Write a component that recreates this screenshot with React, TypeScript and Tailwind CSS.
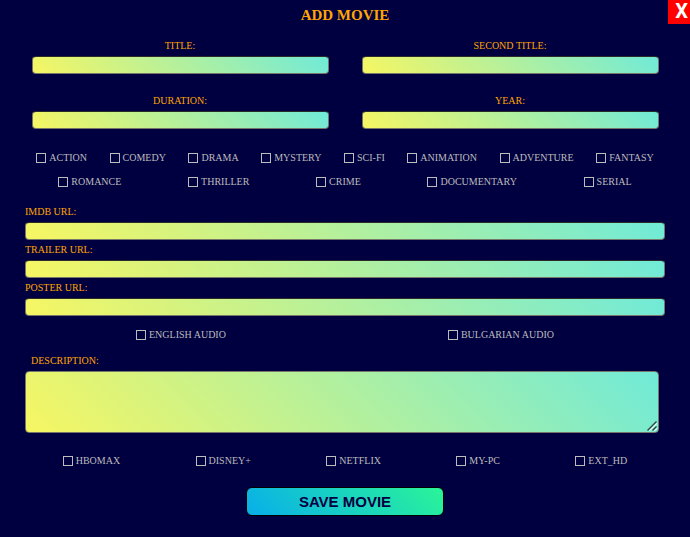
import type { ReactNode } from "react";

const genresTop = ["ACTION", "COMEDY", "DRAMA", "MYSTERY", "SCI-FI", "ANIMATION", "ADVENTURE", "FANTASY"];
const genresBottom = ["ROMANCE", "THRILLER", "CRIME", "DOCUMENTARY", "SERIAL"];
const audio = ["ENGLISH AUDIO", "BULGARIAN AUDIO"];
const platforms = ["HBOMAX", "DISNEY+", "NETFLIX", "MY-PC", "EXT_HD"];

const field =
  "block rounded-[4px] border border-[#76766a] bg-[linear-gradient(45deg,#f7f662,#70ead8)] px-1 text-[10px] text-[#000040] outline-none";

function Check({ name }: { name: string }) {
  return (
    <label className="flex items-center gap-[3px] text-[10px] leading-3 text-[#bcbcbc]">
      <input
        type="checkbox"
        name={name}
        className="size-[10px] appearance-none border border-[#bcbcbc] checked:bg-[#70ead8]"
      />
      {name}
    </label>
  );
}

function CheckRow({ names }: { names: string[] }) {
  return (
    <div className="flex h-6 items-center justify-around px-[10px]">
      {names.map((n) => (
        <Check key={n} name={n} />
      ))}
    </div>
  );
}

function Half({ id, children }: { id: string; children: ReactNode }) {
  return (
    <div className="flex flex-col items-center">
      <label htmlFor={id} className="text-[10px] leading-5 text-[#ffa500]">
        {children}
      </label>
      <input id={id} type="text" className={`${field} h-[18px] w-9/10 border-t-[#2a2a28]`} />
    </div>
  );
}

function Wide({ id, children }: { id: string; children: ReactNode }) {
  return (
    <div className="flex flex-col">
      <label htmlFor={id} className="text-[10px] leading-5 text-[#ffa500]">
        {children}
      </label>
      <input id={id} type="text" className={`${field} h-[18px] w-full border-t-[#2a2a28]`} />
    </div>
  );
}

export default function App() {
  return (
    <main className="relative min-h-screen bg-[#000040] px-[15px] pb-5 font-['Liberation_Serif',serif]">
      <button
        type="button"
        aria-label="Close"
        className="absolute top-0 right-0 flex h-6 w-[22px] items-start justify-end bg-[#ff0000] pr-[2px] font-[Roboto,sans-serif] text-[20px] leading-[22px] font-bold text-white"
      >
        X
      </button>
      <form>
        <h1 className="pt-[5px] text-center text-[15px] leading-5 font-bold text-[#ffa500]">ADD MOVIE</h1>
        <div className="mt-[11px] grid grid-cols-2 gap-y-[17px]">
          <Half id="title">TITLE:</Half>
          <Half id="second-title">SECOND TITLE:</Half>
          <Half id="duration">DURATION:</Half>
          <Half id="year">YEAR:</Half>
        </div>
        <div className="mt-[17px]">
          <CheckRow names={genresTop} />
          <CheckRow names={genresBottom} />
        </div>
        <div className="mt-2 px-[10px]">
          <Wide id="imdb">IMDB URL:</Wide>
          <Wide id="trailer">TRAILER URL:</Wide>
          <Wide id="poster">POSTER URL:</Wide>
        </div>
        <div className="mt-[7px]">
          <CheckRow names={audio} />
        </div>
        <div className="mt-1 pr-4 pl-[10px]">
          <label htmlFor="description" className="block pl-[6px] text-[10px] leading-5 text-[#ffa500]">
            DESCRIPTION:
          </label>
          <div className="relative">
            <textarea id="description" className={`${field} h-[62px] w-full resize-none`} />
            <svg
              viewBox="0 0 10 10"
              className="pointer-events-none absolute right-[2px] bottom-[2px] size-[10px]"
              fill="none"
              strokeWidth="1.4"
              aria-hidden="true"
            >
              <path d="M2 10 L10 2 M7 10 L10 7" stroke="#e4fbf5" />
              <path d="M0.5 9.5 L9.5 0.5 M5.5 9.5 L9.5 5.5" stroke="#25483f" />
            </svg>
          </div>
        </div>
        <div className="mt-4">
          <CheckRow names={platforms} />
        </div>
        <button
          type="submit"
          className="mx-auto mt-[14px] block h-[29px] w-[198px] rounded-[6px] border border-black bg-[linear-gradient(45deg,#08aeea,#2af598)] font-['Liberation_Sans',sans-serif] text-[15px] leading-6 font-bold text-[#000040]"
        >
          SAVE MOVIE
        </button>
      </form>
    </main>
  );
}
